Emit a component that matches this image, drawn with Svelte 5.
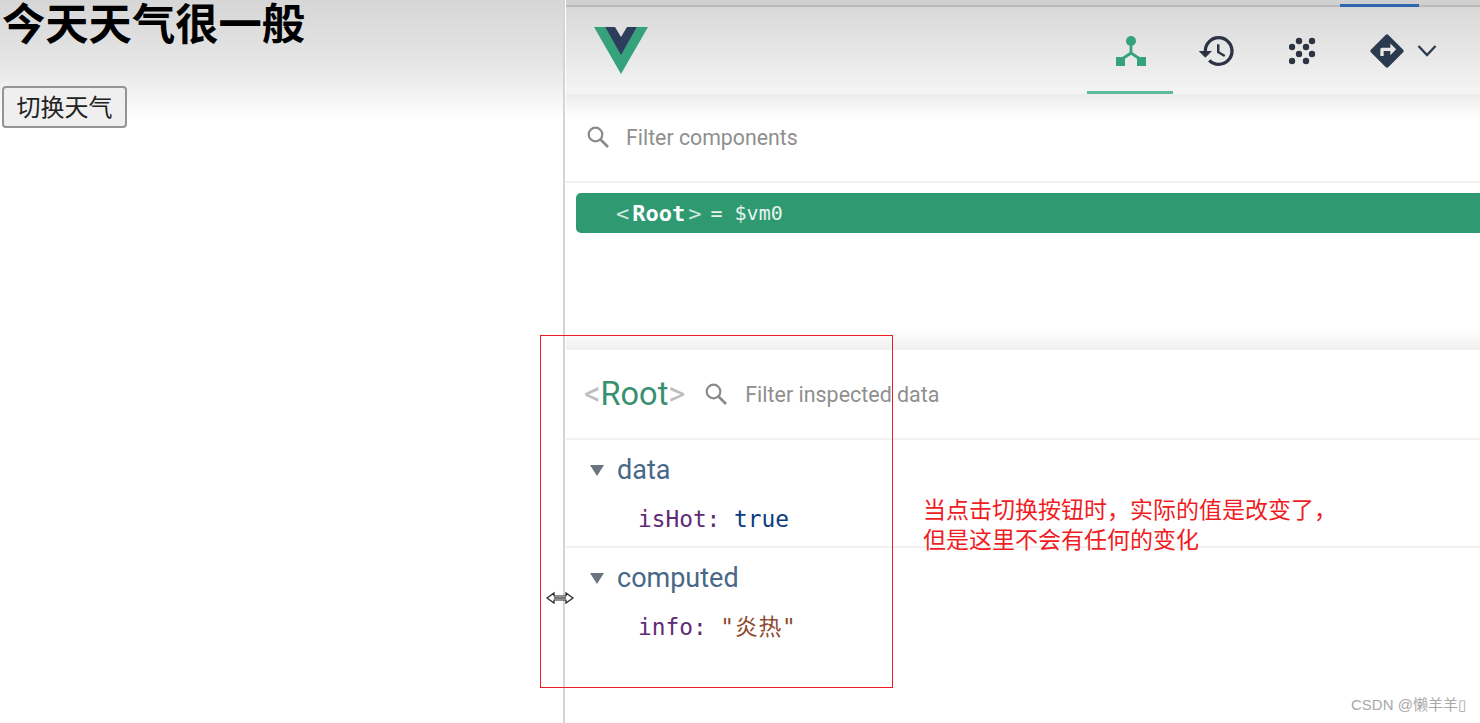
<script lang="ts">
  const vars = [
    { section: 'data', key: 'isHot', value: 'true', kind: 'bool' },
    { section: 'computed', key: 'info', value: '"炎热"', kind: 'str' },
  ];
</script>

<div class="page">
  <section class="preview">
    <h1>今天天气很一般</h1>
    <button type="button">切换天气</button>
  </section>

  <section class="devtools">
    <div class="strip"><span class="strip-tab"></span></div>

    <header class="toolbar">
      <svg class="logo" viewBox="0 0 54 47" width="54" height="47">
        <path d="M0 0h11l16 27L43 0h11L27 47z" fill="#35a27b" />
        <path d="M11 0h10l6 10 6-10h10L27 28z" fill="#2c3e5c" />
      </svg>
      <nav class="tabs">
        <div class="tab active">
          <svg viewBox="0 0 32 30" width="32" height="30">
            <path d="M16 8v9M16 17l-9 6M16 17l9 6" stroke="#35a27b" stroke-width="2.8" fill="none" />
            <circle cx="16" cy="5" r="5" fill="#35a27b" />
            <rect x="1" y="21" width="9" height="9" fill="#35a27b" />
            <rect x="22" y="21" width="9" height="9" fill="#35a27b" />
          </svg>
        </div>
        <div class="tab">
          <svg viewBox="0 0 24 24" width="40" height="40">
            <path fill="#2c3444" d="M13 3a9 9 0 0 0-9 9H1l3.89 3.89.07.14L9 12H6c0-3.87 3.13-7 7-7s7 3.13 7 7-3.13 7-7 7c-1.93 0-3.68-.79-4.94-2.06l-1.42 1.42A8.954 8.954 0 0 0 13 21a9 9 0 0 0 0-18zm-1 5v5l4.28 2.54.72-1.21-3.5-2.08V8H12z" />
          </svg>
        </div>
        <div class="tab">
          <svg viewBox="0 0 28 28" width="28" height="28" fill="#2c3444">
            <circle cx="10" cy="4" r="3.2" /><circle cx="23" cy="4" r="3.2" />
            <circle cx="3" cy="10" r="3.2" /><circle cx="17" cy="10" r="3.2" />
            <circle cx="10" cy="17" r="3.2" /><circle cx="23" cy="17" r="3.2" />
            <circle cx="3" cy="24" r="3.2" /><circle cx="17" cy="24" r="3.2" />
          </svg>
        </div>
        <div class="tab last">
          <svg viewBox="0 0 24 24" width="40" height="40">
            <path fill="#2c3a50" d="M21.71 11.29l-9-9a.996.996 0 0 0-1.41 0l-9 9a.996.996 0 0 0 0 1.41l9 9c.39.39 1.02.39 1.41 0l9-9a.996.996 0 0 0 0-1.41zM14 14.5V12h-4v3H8v-4c0-.55.45-1 1-1h5V7.5l3.5 3.5-3.5 3.5z" />
          </svg>
          <svg viewBox="0 0 20 13" width="20" height="13">
            <path d="M1.5 2L10 11l8.5-9" stroke="#2c3a50" stroke-width="2.4" fill="none" />
          </svg>
        </div>
      </nav>
    </header>

    <div class="filter">
      <svg class="search" viewBox="0 0 22 22" width="22" height="22">
        <circle cx="8.5" cy="8.5" r="6.8" stroke="#8a8a8a" stroke-width="2.2" fill="none" />
        <path d="M13.5 13.5L21 21" stroke="#8a8a8a" stroke-width="2.6" />
      </svg>
      <span>Filter components</span>
    </div>

    <div class="tree">
      <div class="node">
        <span class="angle">&lt;</span><span class="name">Root</span><span class="angle">&gt;</span>
        <span class="vm">= $vm0</span>
      </div>
    </div>

    <div class="inspector">
      <div class="inspector-head">
        <span class="title"><span class="bracket">&lt;</span>Root<span class="bracket">&gt;</span></span>
        <svg class="search" viewBox="0 0 22 22" width="22" height="22">
          <circle cx="8.5" cy="8.5" r="6.8" stroke="#8a8a8a" stroke-width="2.2" fill="none" />
          <path d="M13.5 13.5L21 21" stroke="#8a8a8a" stroke-width="2.6" />
        </svg>
        <span class="filter-text">Filter inspected data</span>
      </div>

      {#each vars as item}
        <div class="group">
          <div class="group-title">
            <span class="caret"></span>
            <span>{item.section}</span>
          </div>
          <div class="prop">
            <span class="key">{item.key}:</span>
            <span class={item.kind}>{item.value}</span>
          </div>
        </div>
      {/each}
    </div>
  </section>

  <!-- annotations pasted over the capture -->
  <div class="red-box"></div>
  <p class="note">当点击切换按钮时，实际的值是改变了，<br />但是这里不会有任何的变化</p>
  <svg class="cursor" viewBox="0 0 28 14" width="28" height="14">
    <path d="M1 7l7-5v3h12V2l7 5-7 5V9H8v3z" fill="#fff" stroke="#222" stroke-width="1.2" />
    <path d="M8 7h12" stroke="#777" stroke-width="2" />
  </svg>
  <span class="watermark">CSDN @懒羊羊▯</span>
</div>

<style>
  :global(body) {
    background: #fff;
  }

  .page {
    position: relative;
    display: flex;
    width: 1480px;
    height: 723px;
    overflow: hidden;
    font-family: Roboto, "Noto Sans CJK SC", sans-serif;
  }

  .preview {
    width: 563px;
    flex-shrink: 0;
    height: 120px;
    background: linear-gradient(#d6d6d6, #e6e6e6 55%, #fff);
    font-family: "Liberation Sans", "Noto Sans CJK SC", sans-serif;
  }

  h1 {
    margin: 0 0 0 2px;
    height: 86px;
    font-size: 43.3px;
    line-height: 50px;
    font-weight: 700;
    color: #000;
  }

  button {
    display: block;
    margin-left: 2px;
    width: 125px;
    height: 42px;
    padding: 2px 0 0;
    font-family: inherit;
    font-size: 24px;
    line-height: 36px;
    color: #222;
    background: #efefef;
    border: 2px solid #949494;
    border-radius: 4px;
  }

  .devtools {
    flex: 1;
    display: flex;
    flex-direction: column;
    border-left: 2px solid #d4d4d4;
    padding-left: 1px;
  }

  .strip {
    height: 8px;
    flex-shrink: 0;
    background: linear-gradient(#d0d0d0 5px, #b9b9b9 5px, #bbb 7px, #d6d6d6 7px);
  }

  .strip-tab {
    display: block;
    width: 79px;
    height: 3px;
    margin: 4px 0 0 774px;
    background: #2f66b0;
  }

  .toolbar {
    height: 86px;
    flex-shrink: 0;
    display: flex;
    align-items: flex-start;
    justify-content: space-between;
    background: linear-gradient(#d9d9d9, #f4f4f4);
  }

  .logo {
    margin: 19px 0 0 28px;
  }

  .tabs {
    display: flex;
    height: 86px;
    margin-right: 35px;
  }

  .tab {
    width: 86px;
    height: 86px;
    box-sizing: border-box;
    display: flex;
    align-items: center;
    justify-content: center;
    padding: 0 0 1px 1px;
  }

  .tab.active {
    border-bottom: 3px solid #5dba9a;
    padding: 3px 0 0 1px;
  }

  .tab.last {
    width: 100px;
    gap: 10px;
    justify-content: flex-start;
    padding-left: 22px;
  }

  .filter {
    height: 89px;
    flex-shrink: 0;
    box-sizing: border-box;
    display: flex;
    align-items: center;
    gap: 17px;
    padding: 0 0 1px 21px;
    border-bottom: 2px solid #f1f1f1;
    background: linear-gradient(#ececec, #fff 24px);
    font-size: 21.3px;
    color: #8f8f8f;
  }

  .tree {
    height: 167px;
    flex-shrink: 0;
    padding: 10px 0 0 10px;
    box-sizing: border-box;
    background: linear-gradient(#fff 147px, #efefef);
  }

  .node {
    height: 40px;
    box-sizing: border-box;
    padding-left: 40px;
    display: flex;
    align-items: center;
    border-radius: 5px 0 0 5px;
    background: #2f9a72;
    color: #fff;
    font-family: "DejaVu Sans Mono", monospace;
    font-size: 22px;
  }

  .node .angle {
    color: #cfe8de;
  }

  .node .name {
    margin: 0 3px;
    font-weight: 700;
  }

  .vm {
    margin-left: 9px;
    font-size: 20px;
    color: #e6f4ee;
  }

  .inspector-head {
    height: 90px;
    box-sizing: border-box;
    display: flex;
    align-items: center;
    gap: 20px;
    padding-left: 18px;
    border-bottom: 2px solid #f1f1f1;
  }

  .title {
    font-size: 32.5px;
    color: #38906f;
  }

  .bracket {
    color: #bdbdbd;
  }

  .filter-text {
    margin-left: -2px;
    font-size: 21.45px;
    color: #8f8f8f;
  }

  .group {
    height: 108px;
    box-sizing: border-box;
    padding: 13px 0 0 24px;
    border-bottom: 2px solid #f1f1f1;
  }

  .group:last-child {
    border-bottom: 0;
  }

  .group-title {
    display: flex;
    align-items: center;
    gap: 13px;
    height: 34px;
    font-size: 27px;
    color: #486887;
  }

  .caret {
    width: 0;
    height: 0;
    border-left: 7px solid transparent;
    border-right: 7px solid transparent;
    border-top: 11px solid #6b7280;
  }

  .prop {
    width: fit-content;
    margin: 17px 0 0 48px;
    font-family: "DejaVu Sans Mono", "Noto Sans CJK SC", monospace;
    font-size: 22.8px;
    line-height: 30px;
    white-space: nowrap;
  }

  .key {
    color: #5f2a74;
  }

  .bool {
    color: #0a3d80;
  }

  .str {
    color: #8f4a32;
    letter-spacing: 0.8px;
  }

  .red-box {
    position: absolute;
    left: 540px;
    top: 335px;
    width: 351px;
    height: 351px;
    border: 1px solid #ed1c24;
  }

  .note {
    position: absolute;
    left: 923px;
    top: 493px;
    margin: 0;
    font-family: "Noto Sans CJK SC", sans-serif;
    font-size: 23px;
    line-height: 30px;
    color: #f01c24;
    white-space: nowrap;
  }

  .cursor {
    position: absolute;
    left: 546px;
    top: 591px;
  }

  .watermark {
    position: absolute;
    left: 1351px;
    top: 696px;
    font-family: "Liberation Sans", "Noto Sans CJK SC", sans-serif;
    font-size: 15px;
    line-height: 18px;
    color: #a8a8a8;
    white-space: nowrap;
  }
</style>
